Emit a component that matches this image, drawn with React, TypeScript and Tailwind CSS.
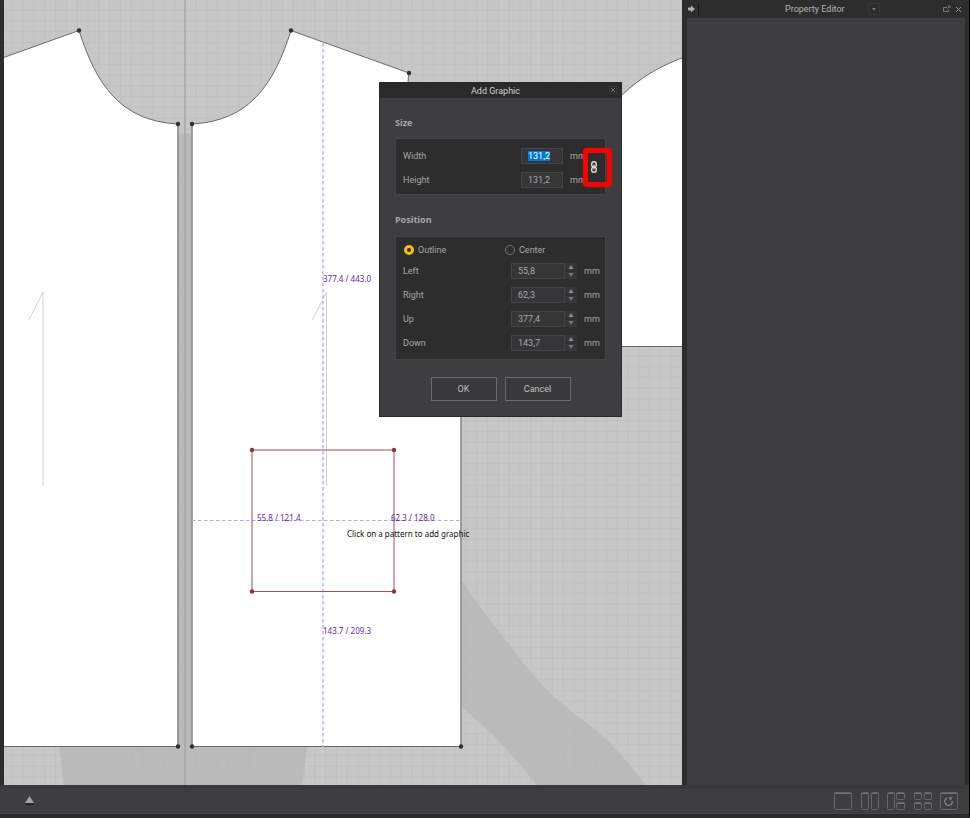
import { useEffect, useRef } from 'react';

const positions = [
  { label: 'Left', value: '55,8' },
  { label: 'Right', value: '62,3' },
  { label: 'Up', value: '377,4' },
  { label: 'Down', value: '143,7' },
];

const points = [
  [79, 30.5],
  [178, 124],
  [192, 124],
  [291, 30.5],
  [409, 73],
  [178, 746.5],
  [192, 746.5],
  [461, 746.5],
];

const corners = [
  [252, 450],
  [394, 450],
  [252, 591.5],
  [394, 591.5],
];

function PatternCanvas() {
  return (
    <svg
      className="absolute inset-0 h-full w-full"
      viewBox="4 0 678 785"
      preserveAspectRatio="xMinYMin slice"
      aria-label="2D pattern window"
    >
      <defs>
        <pattern id="grid" x="1.1" y="9.7" width="10.8" height="10.8" patternUnits="userSpaceOnUse">
          <path d="M0 .5H10.8M.5 0V10.8" stroke="#c0c0c0" strokeWidth="1" />
        </pattern>
      </defs>
      <rect x="4" width="678" height="785" fill="#c7c7c7" />
      <rect x="4" width="678" height="785" fill="url(#grid)" />

      {/* avatar silhouette */}
      <g fill="#b6b6b6" fillOpacity="0.75">
        <path d="M178 134Q185 132 192 134V747H178Z" />
        <path d="M59 747L64 785H302L307 747Z" />
        <path d="M461 580C477 604 490 620 507 642C522 662 536 679 550 693C570 712 590 724 607 740C622 755 633 769 646 785H537C522 767 508 750 490 732C480 723 470 714 461 707Z" />
      </g>
      <path d="M185 0V785" stroke="#a6a6a6" strokeWidth="1.4" />

      {/* pattern pieces */}
      <g fill="#fff" stroke="#6b6b6b" strokeWidth="1">
        <path d="M-2 59.5L79 30.5C96 84 120 121 178 124V746.5H-2Z" />
        <path d="M291 30.5L409 73C402 120 410 290 461 300V746.5H192V124C250 121 274 84 291 30.5Z" />
        <path d="M570 346.5C575 230 590 120 622 95C641 77 661 65 690 55V346.5Z" />
      </g>
      <path d="M178 124V747M192 124V747M461 417V747" stroke="#999" strokeWidth="1.4" />
      <g fill="none" stroke="#d3d3d3">
        <path d="M28.5 320.5L43 292V486" />
        <path d="M312 320.5L326.5 292V486" />
      </g>

      {/* placement guides */}
      <g stroke="#b3a9de" strokeDasharray="3.5 2.5">
        <path d="M323 43V747" strokeWidth="1.3" />
        <path d="M192 520.5H461" />
      </g>
      <rect x="252" y="450" width="142" height="141.5" fill="none" stroke="#9c5156" />
      {corners.map(([x, y]) => (
        <circle key={`${x}-${y}`} cx={x} cy={y} r="2.2" fill="#8f3338" />
      ))}
      {points.map(([x, y]) => (
        <circle key={`${x}-${y}`} cx={x} cy={y} r="2.2" fill="#303030" />
      ))}

      <g className="font-['Noto_Sans'] text-[8px]" fill="#6128b8">
        <text x="323" y="282">377.4 / 443.0</text>
        <text x="257" y="521">55.8 / 121.4</text>
        <text x="391" y="521">62.3 / 128.0</text>
        <text x="323" y="634">143.7 / 209.3</text>
      </g>
      <text x="347" y="537" className="font-['Noto_Sans'] text-[8px]" fill="#111">
        Click on a pattern to add graphic
      </text>
    </svg>
  );
}

function AddGraphicDialog() {
  const widthRef = useRef<HTMLInputElement>(null);

  useEffect(() => {
    widthRef.current?.focus();
    widthRef.current?.select();
  }, []);

  const field =
    'h-4 border border-[#454547] bg-[#363638] pl-[6px] text-[9px] text-[#a6a6a6] outline-none selection:bg-[#0078d7] selection:text-white';

  return (
    <section
      role="dialog"
      aria-label="Add Graphic"
      className="absolute left-[375px] top-[82px] w-[243px] border-x border-b border-[#2a2a2a] bg-[#3e3e40]"
    >
      <header className="relative h-4 bg-[#2a2a2a] pr-[10px] text-center leading-[18px] text-[#d0d0d0]">
        Add Graphic
        <button aria-label="Close" className="absolute right-1 top-1 flex size-2 items-center justify-center border border-[#363636]">
          <svg width="6" height="6" viewBox="0 0 6 6" className="shrink-0">
            <path d="M1 1L5 5M5 1L1 5" stroke="#777" />
          </svg>
        </button>
      </header>

      <form className="px-[15px] pb-[15px] pt-[17px]" onSubmit={(e) => e.preventDefault()}>
        <h2 className="font-['Noto_Sans'] font-bold leading-4">Size</h2>
        <div className="relative mt-[7px] flex items-center border border-[#454547] bg-[#2d2d2d] pb-[2px] pl-[7px] pr-[3px] pt-[5px]">
          <div className="flex-1">
            <div className="flex h-6 items-center">
              <label htmlFor="width" className="flex-1">Width</label>
              <input id="width" ref={widthRef} defaultValue="131,2" className={`${field} w-[42px]`} />
              <span className="ml-[7px] w-4">mm</span>
            </div>
            <div className="flex h-6 items-center">
              <label htmlFor="height" className="flex-1">Height</label>
              <input id="height" defaultValue="131,2" className={`${field} w-[42px]`} />
              <span className="ml-[7px] w-4">mm</span>
            </div>
          </div>
          <button type="button" aria-label="Keep proportions" className="flex h-8 w-4 items-center justify-center pb-[2px]">
            <svg width="8" height="14" viewBox="0 0 8 14" fill="none" stroke="#dcdcdc">
              <rect x="1.7" y="1.7" width="4.6" height="5.2" rx="2.2" strokeWidth="1.4" />
              <rect x="1.7" y="7.1" width="4.6" height="5.2" rx="2.2" strokeWidth="1.4" />
              <path d="M4 4.5V9.5" strokeWidth="1.2" />
            </svg>
          </button>
          <span className="pointer-events-none absolute -right-[7px] top-[9px] h-[39px] w-[29px] rounded-[4px] border-[5px] border-[#f60404] shadow-[0_0_1px_#f60404]" />
        </div>

        <h2 className="mt-[17px] font-['Noto_Sans'] font-bold leading-4">Position</h2>
        <fieldset className="mt-2 min-w-0 border border-[#454547] bg-[#2d2d2d] pb-1 pl-[7px] pr-[5px] pt-1">
          <div className="grid h-[18px] grid-cols-[101px_1fr] items-center pl-px">
            {['Outline', 'Center'].map((name, i) => (
              <label key={name} className="flex items-center gap-1">
                <input
                  type="radio"
                  name="origin"
                  defaultChecked={i === 0}
                  className="size-[10px] appearance-none rounded-full border border-[#777] checked:border-[3px] checked:border-[#f7bd0b]"
                />
                {name}
              </label>
            ))}
          </div>
          {positions.map(({ label, value }) => (
            <div key={label} className="flex h-6 items-center">
              <label htmlFor={label} className="flex-1">{label}</label>
              <input id={label} defaultValue={value} className={`${field} w-[54px]`} />
              <span className="flex h-4 w-3 flex-col bg-[#363638]">
                <button type="button" aria-label={`Increase ${label}`} className="flex flex-1 items-center justify-center">
                  <svg width="6" height="4" viewBox="0 0 6 4"><path d="M3 0L5.5 4H.5Z" fill="#8c8c8c" /></svg>
                </button>
                <button type="button" aria-label={`Decrease ${label}`} className="flex flex-1 items-center justify-center border-t border-[#2d2d2d]">
                  <svg width="6" height="4" viewBox="0 0 6 4"><path d="M3 4L5.5 0H.5Z" fill="#777" /></svg>
                </button>
              </span>
              <span className="ml-[7px] w-4">mm</span>
            </div>
          ))}
        </fieldset>

        <div className="mt-[17px] flex justify-center gap-2">
          <button type="submit" className="h-6 w-[66px] border border-[#6a6a6c] bg-[#39393b] text-[#c0c0c0]">OK</button>
          <button type="button" className="h-6 w-[66px] border border-[#6a6a6c] bg-[#39393b] text-[#c0c0c0]">Cancel</button>
        </div>
      </form>
    </section>
  );
}

function PropertyEditor() {
  return (
    <aside className="flex w-[288px] shrink-0 flex-col border-r border-black bg-[#2d2d2d] pl-[5px] pr-1">
      <header className="relative flex h-[18px] items-center text-[#b4b4b4]">
        <button aria-label="Collapse panel" className="flex h-3 w-3 items-center border-r border-[#161616] pl-px">
          <svg width="7" height="8" viewBox="0 0 7 8"><path d="M0 2.5H3V.5L7 4L3 7.5V5.5H0Z" fill="#b0b0b0" /></svg>
        </button>
        <h1 className="ml-[86px]">Property Editor</h1>
        <button aria-label="Panel menu" className="absolute left-[181px] top-[3px] flex size-3 items-center justify-center rounded-[2px] border border-[#393939]">
          <svg width="4" height="3" viewBox="0 0 4 3"><path d="M0 0H4L2 3Z" fill="#757575" /></svg>
        </button>
        <div className="ml-auto flex gap-[3px] pr-[2px]">
          <button aria-label="Undock" className="flex size-[9px] items-center justify-center">
            <svg width="8" height="8" viewBox="0 0 8 8" fill="none" stroke="#777">
              <path d="M4 2.5H.5V6.5H5.5V4.5M4.5 3.5L7 1M5 1H7V3" />
            </svg>
          </button>
          <button aria-label="Close panel" className="flex size-[9px] items-center justify-center">
            <svg width="7" height="7" viewBox="0 0 7 7"><path d="M1 1L6 6M6 1L1 6" stroke="#8c8c8c" /></svg>
          </button>
        </div>
      </header>
      <div className="flex-1 bg-[#3e3e40]" />
    </aside>
  );
}

const layouts = [
  { name: 'Single view', boxes: [[0, 0, 17, 17]] },
  { name: 'Two columns', boxes: [[0, 0, 7, 17], [10, 0, 7, 17]] },
  { name: 'Three views', boxes: [[0, 0, 7, 17], [9, 0, 8, 7], [9, 10, 8, 7]] },
  { name: 'Four views', boxes: [[0, 0, 7, 7], [10, 0, 7, 7], [0, 10, 7, 7], [10, 10, 7, 7]] },
  { name: 'Reset view', boxes: [[0, 0, 17, 17]] },
];

function BottomBar() {
  return (
    <footer className="border-b-4 border-r border-b-[#2a2a2a] border-r-black bg-[#3e3e40]">
      <div className="mr-1 flex h-[29px] items-center justify-between border-b border-t-4 border-b-[#464648] border-t-[#39393b] pl-[25px] pr-[7px]">
        <button aria-label="Expand timeline">
          <svg width="9" height="10" viewBox="0 0 9 10">
            <path d="M0 7H9V9H1Z" fill="#272727" />
            <path d="M4.5 0L9 7H0Z" fill="#a2a2a2" />
          </svg>
        </button>
        <div className="flex w-[124px] justify-between">
          {layouts.map(({ name, boxes }) => (
            <button key={name} aria-label={name}>
              <svg width="18" height="18" viewBox="0 0 18 18" fill="none">
                {boxes.map(([x, y, w, h], i) => (
                  <g key={i}>
                    <rect x={x + 0.5} y={y + 0.5} width={w} height={h} rx="1" stroke="#666668" />
                    <path d={`M${x + 1} ${y + 1.5}H${x + w}`} stroke="#737375" />
                  </g>
                ))}
                {name === 'Reset view' && (
                  <g>
                    <path d="M7 6.2A3.700 3.700 0 1 0 12.200 9" stroke="#808082" strokeWidth="1.300" />
                    <path d="M8.500 5L12.500 5.500L10.500 9Z" fill="#808082" />
                  </g>
                )}
              </svg>
            </button>
          ))}
        </div>
      </div>
    </footer>
  );
}

export default function App() {
  return (
    <div className="flex min-h-screen flex-col bg-[#2d2d2d] font-[Roboto,sans-serif] text-[9px] leading-3 text-[#a6a6a6]">
      <div className="flex flex-1">
        <main className="relative ml-1 min-w-0 flex-1 overflow-hidden">
          <PatternCanvas />
          <AddGraphicDialog />
        </main>
        <PropertyEditor />
      </div>
      <BottomBar />
    </div>
  );
}
